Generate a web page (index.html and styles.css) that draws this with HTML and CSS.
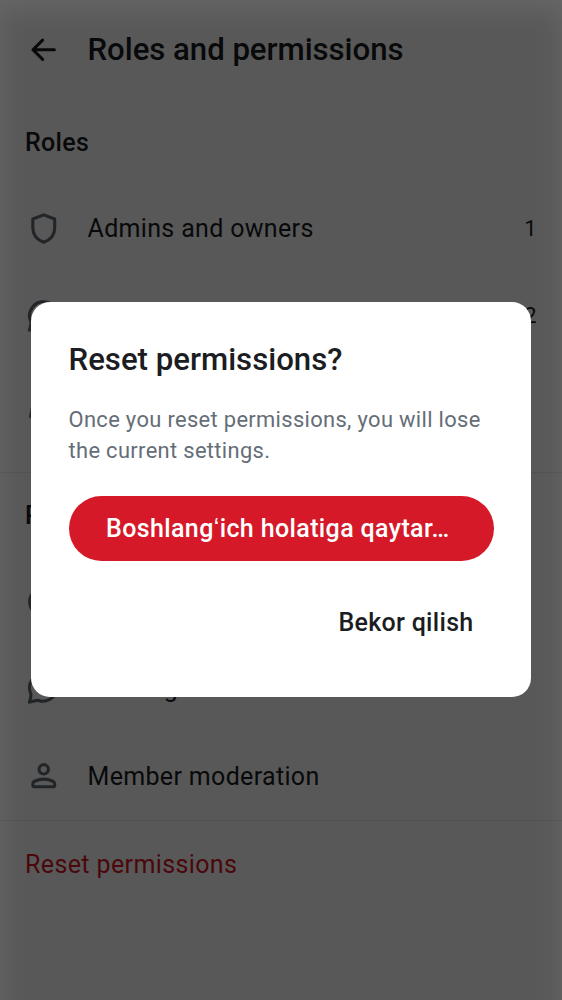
FILE: index.html
```html
<!DOCTYPE html>
<html lang="uz">
<head>
<meta charset="utf-8">
<title>Roles and permissions</title>
<link rel="stylesheet" href="styles.css">
</head>
<body>
<div class="screen">
  <header class="bar">
    <svg class="icon" viewBox="0 0 24 24"><path d="M18.800 12H5.500M11.300 5.800L5.100 12l6.200 6.200" fill="none" stroke="currentColor" stroke-width="2" stroke-linecap="round" stroke-linejoin="round"/></svg>
    <h1 class="title">Roles and permissions</h1>
  </header>
  <section class="section roles">
    <h2 class="heading">Roles</h2>
    <div class="row">
      <svg class="icon" viewBox="0 0 24 24"><path d="M12 3.100l7 2.700v5.500c0 4.400-2.700 7.700-7 9.300-4.300-1.600-7-4.900-7-9.300V5.800z" fill="none" stroke="currentColor" stroke-width="2" stroke-linejoin="round"/></svg>
      <span class="label">Admins and owners</span><span class="count">1</span>
    </div>
    <div class="row">
      <svg class="icon" viewBox="0 0 24 24"><path d="M12 3a9 9 0 1 1-3.800 17.200Q7 19.700 2.800 21.200q1.300-4 .9-5.500A9 9 0 0 1 12 3z" fill="none" stroke="currentColor" stroke-width="2" stroke-linejoin="round"/></svg>
      <span class="label">Moderators</span><span class="count">2</span>
    </div>
    <div class="row">
      <svg class="icon" viewBox="0 0 24 24"><path d="M3.600 20.900l1-5.100L16.500 4l3.700 3.700L8.400 19.600z" fill="none" stroke="currentColor" stroke-width="2" stroke-linejoin="round"/></svg>
      <span class="label">Members</span>
    </div>
  </section>
  <section class="section">
    <h2 class="heading">Permissions</h2>
    <div class="row">
      <svg class="icon" viewBox="0 0 24 24"><circle cx="12" cy="12" r="9" fill="none" stroke="currentColor" stroke-width="2"/><path d="M12 11v5M12 8v.1" fill="none" stroke="currentColor" stroke-width="2" stroke-linecap="round"/></svg>
      <span class="label">Room details</span>
    </div>
    <div class="row">
      <svg class="icon" viewBox="0 0 24 24"><path d="M12.400 2.400a8.800 8.800 0 1 1-3.700 17.100Q7.500 19.200 2.800 20.600q1.300-4 .9-5.500A9 9 0 0 1 12.400 2.400z" fill="none" stroke="currentColor" stroke-width="2" stroke-linejoin="round"/></svg>
      <span class="label">Messages and content</span>
    </div>
    <div class="row">
      <svg class="icon" viewBox="0 0 24 24"><g fill="none" stroke="currentColor" stroke-width="2" stroke-linejoin="round"><circle cx="12" cy="7.900" r="3"/><path d="M5 17.300c0-.8.400-1.400 1.100-1.800 3.800-1.700 8-1.700 11.800 0 .7.400 1.100 1 1.100 1.800V18c0 .6-.4 1-1 1H6c-.6 0-1-.4-1-1z"/></g></svg>
      <span class="label">Member moderation</span>
    </div>
  </section>
  <div class="row danger"><span class="label">Reset permissions</span></div>
</div>
<div class="scrim">
  <div class="dialog" role="dialog">
    <h2 class="dialog-title">Reset permissions?</h2>
    <p class="message">Once you reset permissions, you will lose the current settings.</p>
    <button class="primary">Boshlangʻich holatiga qaytar…</button>
    <button class="cancel">Bekor qilish</button>
  </div>
</div>
</body>
</html>
```
FILE: styles.css
```css
* { box-sizing: border-box; }
body { margin: 0; font-family: Roboto, sans-serif; background: #fff; }
h1, h2, p { margin: 0; font-weight: 500; }
.screen { height: 1000px; overflow: hidden; color: #1b1d22; }
.bar { display: flex; align-items: center; gap: 25px; height: 100px; padding: 0 25px; }
.title { font-size: 31.2px; letter-spacing: -.04px; padding-bottom: 1px; }
.icon { width: 37.5px; height: 37.5px; flex: none; display: block; }
.row .icon { color: #656d77; }
.section { border-bottom: 1px solid #e9ebee; }
.roles { padding-bottom: 25.4px; }
.heading { height: 84.6px; display: flex; align-items: center; padding: 0 25px; font-size: 25px; letter-spacing: .3px; }
.row { height: 87.4px; display: flex; align-items: center; gap: 25px; padding: 0 25px; font-size: 25px; letter-spacing: .33px; }
.label { flex: 1; }
.count { font-size: 21.9px; letter-spacing: .4px; }
.danger { color: #d51928; letter-spacing: .38px; }
.scrim { position: absolute; inset: 0; display: flex; align-items: center; justify-content: center; background: rgba(0,0,0,.6); overflow: hidden; padding-bottom: 1px; }
.scrim::before { content: ""; position: absolute; inset: 10px 1px -100px; background: rgba(0,0,0,.13); filter: blur(12px); }
.dialog { position: relative; width: 500px; height: 395px; padding: 39px 37.5px 37px; border-radius: 19px; background: #fff; display: flex; flex-direction: column; }
.dialog-title { font-size: 31.2px; line-height: 38px; color: #1b1d22; }
.message { margin-top: 25px; font-size: 21.9px; line-height: 31.2px; letter-spacing: .34px; font-weight: 400; color: #656d77; }
button { border: 0; font-family: inherit; font-size: 25px; font-weight: 500; letter-spacing: .3px; padding: 0; white-space: nowrap; }
.primary { margin-top: 30px; height: 65px; padding: 0 37.5px; border-radius: 33px; background: #d51928; color: #fff; text-align: left; letter-spacing: .38px; }
.cancel { align-self: flex-end; margin: 29px 20px 0 0; height: 65px; background: none; color: #1b1d22; }
```
